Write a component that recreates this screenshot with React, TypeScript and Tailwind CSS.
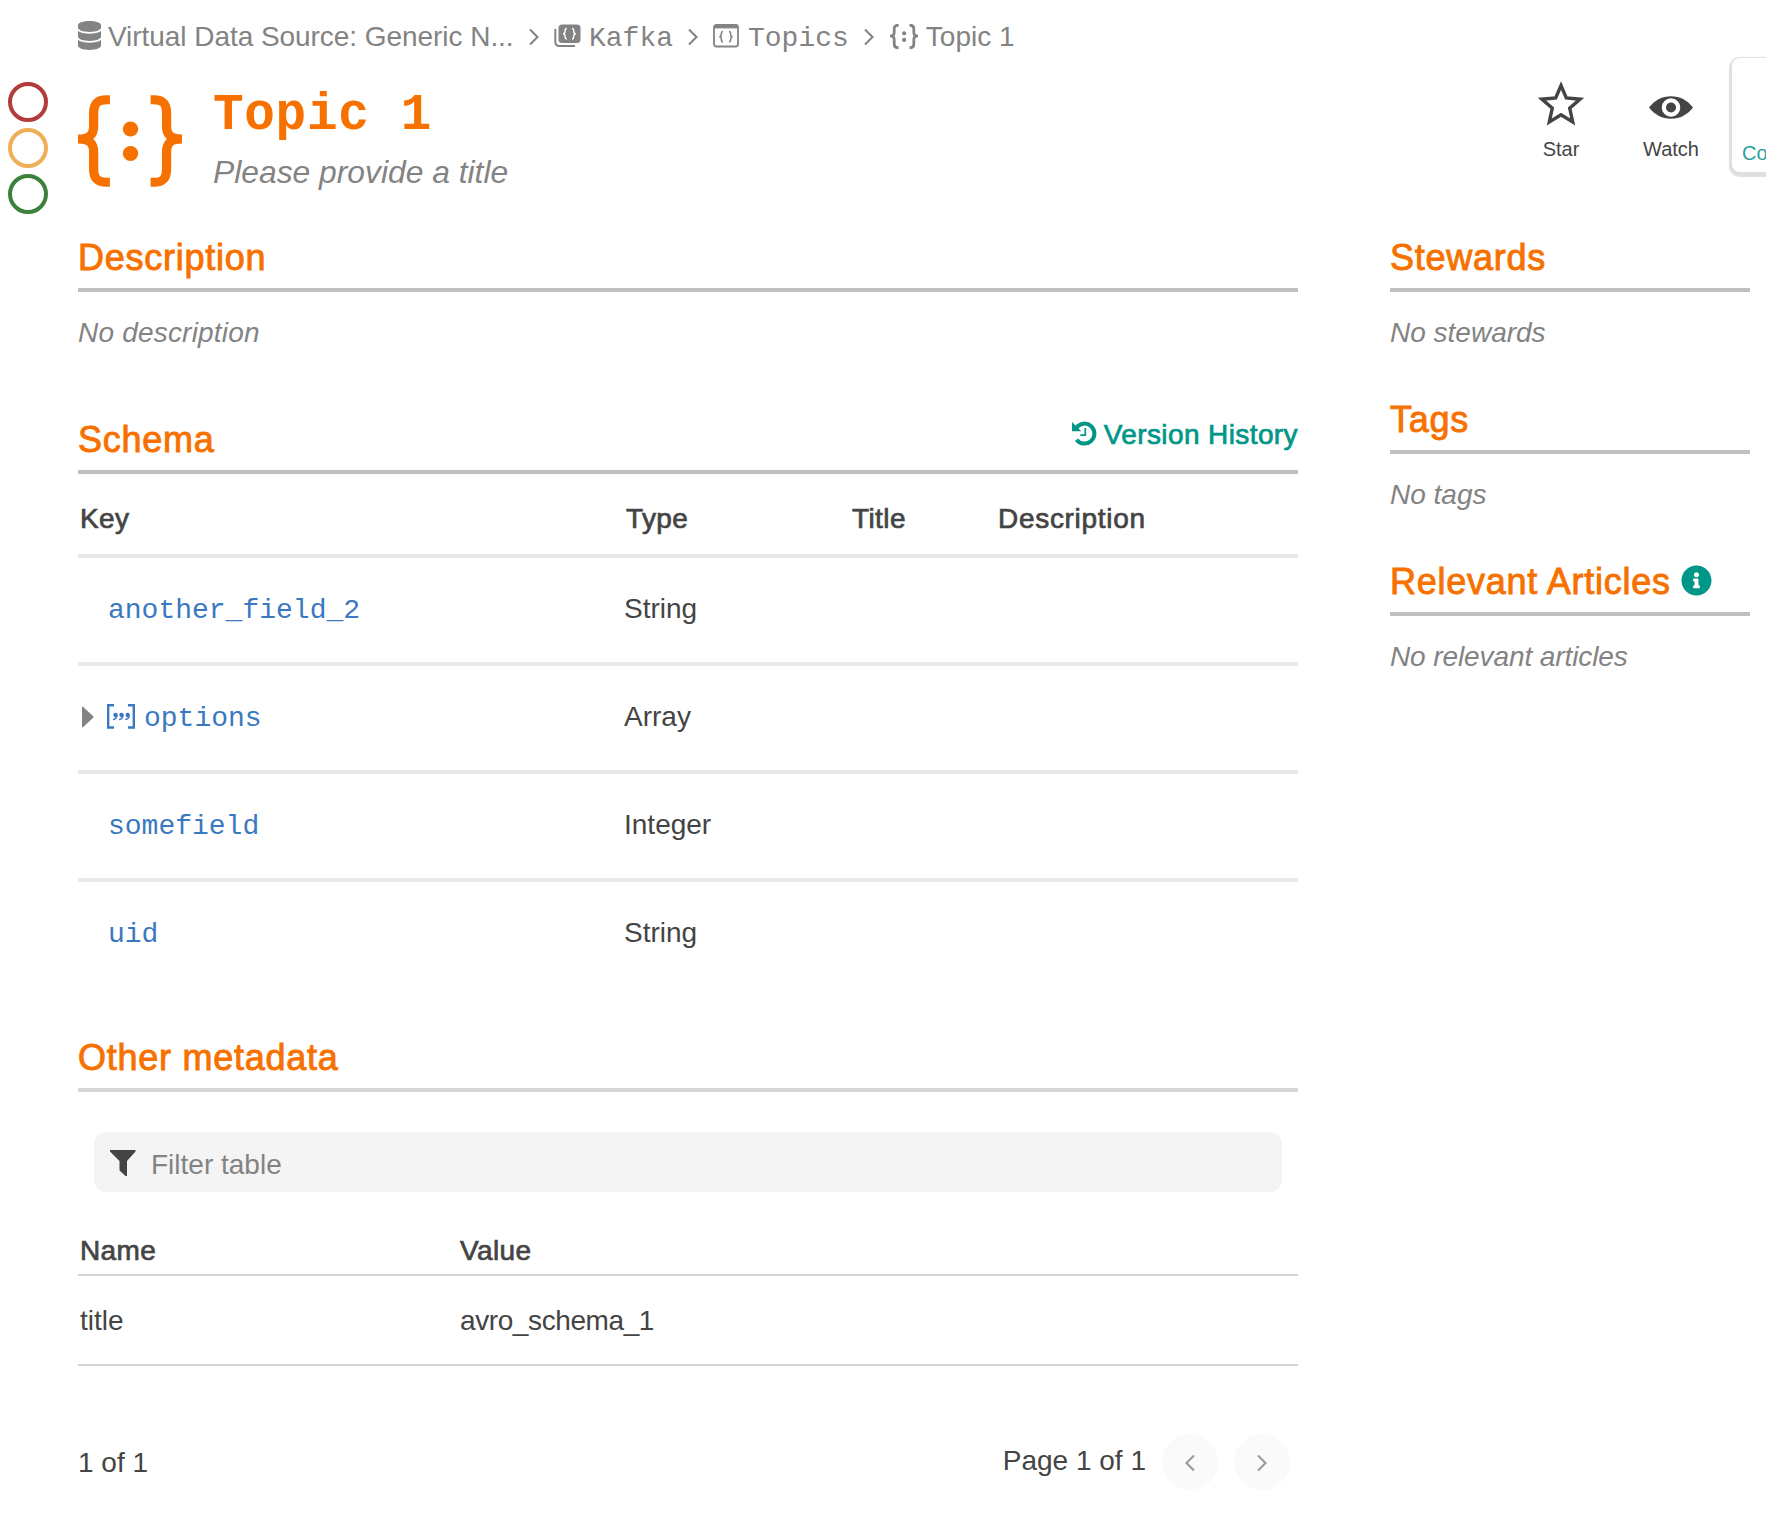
import React from "react";
import { FaDatabase, FaInfoCircle } from "react-icons/fa";

const mono = "font-['Liberation_Mono',monospace]";

function Chevron({ className = "", flip = false }: { className?: string; flip?: boolean }) {
  return (
    <svg className={className} width="10" height="18" viewBox="0 0 10 18" fill="none" stroke="currentColor" strokeWidth="2.100">
      <path d={flip ? "M9 1.5 1.5 9 9 16.5" : "M1 1.5 8.5 9 1 16.5"} />
    </svg>
  );
}

function TopicGlyph({ className, strokeWidth = 9 }: { className: string; strokeWidth?: number }) {
  return (
    <svg className={className} viewBox="0 0 101 92" preserveAspectRatio="none" fill="none" stroke="currentColor" strokeWidth={strokeWidth}>
      <path d="M31 4.7H28C19 4.7 15.200 8.500 15.200 18V31C15.200 40 11 44 0 44C11 44 15.200 48 15.200 57V74C15.200 83.500 19 87.300 28 87.300H31" />
      <path d="M70.500 4.700H73.500C82.500 4.700 86 8.500 86 18V31C86 40 90 44 101 44C90 44 86 48 86 57V74C86 83.500 82.500 87.300 73.500 87.300H70.500" />
      <circle cx="51" cy="34" r="7.500" fill="currentColor" stroke="none" />
      <circle cx="51" cy="58.500" r="7.500" fill="currentColor" stroke="none" />
    </svg>
  );
}

function StackIcon() {
  return (
    <svg width="27" height="24" viewBox="0 0 27 24" fill="none">
      <path d="M1.300 5V18C1.300 20.500 3 22 5.500 22H21" stroke="currentColor" strokeWidth="2" />
      <rect x="4.500" y="0.500" width="22" height="18.500" rx="3.500" fill="currentColor" />
      <path d="M12.800 4.500C11 4.500 11 5.500 11 7.500S10.500 9.800 9 9.800C10.500 9.800 11 10.200 11 12S11 15 12.800 15M18 4.500C19.800 4.500 19.800 5.500 19.800 7.500S20.300 9.800 21.800 9.800C20.300 9.800 19.800 10.200 19.800 12S19.800 15 18 15" stroke="white" strokeWidth="1.400" />
    </svg>
  );
}

function WindowIcon() {
  return (
    <svg width="26" height="24" viewBox="0 0 26 24" fill="none" stroke="currentColor">
      <rect x="1" y="1" width="24" height="21.500" rx="2.500" strokeWidth="1.800" />
      <path d="M1.500 2.500H24.500" strokeWidth="3.800" />
      <path d="M10 7.500C8.300 7.500 8.300 8.500 8.300 10.300S7.800 12.800 6.300 12.800C7.800 12.800 8.300 13.300 8.300 15S8.300 18 10 18M16 7.500C17.700 7.500 17.700 8.500 17.700 10.300S18.200 12.800 19.700 12.800C18.200 12.800 17.700 13.300 17.700 15S17.700 18 16 18" strokeWidth="1.500" />
    </svg>
  );
}

function ArrayIcon() {
  return (
    <svg width="28" height="25" viewBox="0 0 28 25" fill="none" stroke="currentColor">
      <path d="M7 1.200H1.200V23.500H7M21 1.200H26.800V23.500H21" strokeWidth="2.400" />
      {[8.500, 14.500, 20.700].map((x) => (
        <g key={x}>
          <circle cx={x} cy="11" r="2.200" fill="currentColor" stroke="none" />
          <path d={`M${x + 1.400} 11C${x + 1.400} 14 ${x - 0.500} 15.300 ${x - 2.500} 15.600`} strokeWidth="1.500" />
        </g>
      ))}
    </svg>
  );
}

function HistoryIcon() {
  return (
    <svg width="25" height="25" viewBox="0 0 25 25" fill="none" stroke="currentColor">
      <path d="M4.500 6.500A10 10 0 1 1 4.500 18.700" strokeWidth="4" />
      <path d="M0 1V10.300H9.300Z" fill="currentColor" stroke="none" />
      <path d="M13.300 7V14.200H8.300" strokeWidth="1.700" />
    </svg>
  );
}

function Heading({ children, light = false }: { children: React.ReactNode; light?: boolean }) {
  return (
    <h2
      className={`flex h-14 items-start border-b-4 text-[36px] leading-[44px] font-normal tracking-[0.75px] text-[#f77100] [-webkit-text-stroke:0.9px_#f77100] ${
        light ? "border-[#d6d6d6]" : "border-[#c0c0c0]"
      }`}
    >
      {children}
    </h2>
  );
}

const medium = "tracking-[0.4px] [-webkit-text-stroke:0.7px]";

const fields = [
  { name: "another_field_2", type: "String" },
  { name: "options", type: "Array", array: true },
  { name: "somefield", type: "Integer" },
  { name: "uid", type: "String" },
];

export default function App() {
  return (
    <div className="h-[1540px] w-[1766px] overflow-hidden bg-white font-['Liberation_Sans',sans-serif] text-[28px] leading-10 text-[#444]">
      <nav className="flex h-[72px] items-center pl-[78px] text-[#838383]">
        <FaDatabase preserveAspectRatio="none" className="mb-px h-[29px] w-[23px]" />
        <span className="mt-0.5 ml-[7px] w-[391px] whitespace-nowrap tracking-[-0.05px]">Virtual Data Source: Generic N...</span>
        <Chevron className="mt-px ml-[30px]" />
        <span className="ml-[15px]"><StackIcon /></span>
        <span className={`mt-[5px] ml-2 ${mono}`}>Kafka</span>
        <Chevron className="mt-px ml-[15px]" />
        <span className="ml-[15px]"><WindowIcon /></span>
        <span className={`mt-[5px] ml-[9px] ${mono}`}>Topics</span>
        <Chevron className="mt-px ml-[15px]" />
        <TopicGlyph className="ml-4 h-[25px] w-[28px]" strokeWidth={10} />
        <span className="mt-0.5 ml-2">Topic 1</span>
      </nav>

      <header className="flex h-[164px] w-[1900px] items-start">
        <div className="mt-[10px] ml-2 flex w-[70px] flex-col gap-[6px]">
          <span className="size-10 rounded-full border-4 border-[#b23c3c]" />
          <span className="size-10 rounded-full border-4 border-[#efae58]" />
          <span className="size-10 rounded-full border-4 border-[#3c803c]" />
        </div>
        <TopicGlyph className="mt-[23px] h-[92px] w-[104px] text-[#f77100]" />
        <div className="mt-[14px] ml-[30px] w-[1294px]">
          <h1 className={`ml-[1px] text-[51px] leading-[60px] font-bold tracking-[0.7px] text-[#f77100] ${mono}`}>Topic 1</h1>
          <p className="mt-[6px] ml-px text-[31.8px] leading-10 text-[#838383] italic">Please provide a title</p>
        </div>
        <div className="mt-[9px] flex w-[110px] flex-col items-center text-xl leading-7">
          <svg width="46" height="46" viewBox="0 0 46 46" fill="none" stroke="currentColor" strokeWidth="3.400">
            <path d="M23 4.500 28.300 17 42 18.200 31.700 27.200 34.700 41 23 33.800 11.300 41 14.300 27.200 4 18.200 17.700 17Z" />
          </svg>
          <span className="mt-2">Star</span>
        </div>
        <div className="mt-[10px] flex w-[110px] flex-col items-center text-xl leading-7">
          <svg width="46" height="46" viewBox="0 0 46 46">
            <path d="M1 25.500C7 18 14 14.200 23 14.200S39 18 45 25.500C39 33 32 36.800 23 36.800S7 33 1 25.500Z" fill="currentColor" />
            <circle cx="23" cy="25.500" r="9.300" fill="white" />
            <circle cx="23" cy="25.500" r="5" fill="currentColor" />
          </svg>
          <span className="mt-[7px]">Watch</span>
        </div>
        <div className="-mt-[14px] ml-[6px] h-[114px] w-[110px] rounded-lg bg-white pt-[81px] pl-[10px] text-xl leading-7 text-[#26a297] shadow-[0_2px_1px_3px_#dfdfdf]">
          Co
        </div>
      </header>

      <div className="flex pl-[78px]">
        <main className="w-[1220px]">
          <Heading>Description</Heading>
          <p className="mt-[21px] tracking-[0.2px] text-[#838383] italic">No description</p>

          <section className="mt-[65px]">
            <div className="relative">
              <Heading>Schema</Heading>
              <a className={`absolute top-[-3px] right-0 flex items-center gap-[7px] text-[#009688] ${medium}`}>
                <span className="mb-[3px]"><HistoryIcon /></span>
                Version History
              </a>
            </div>
            <div className={`flex h-[84px] items-center border-b-4 border-[#e8e8e8] pt-[10px] pl-[2px] ${medium}`}>
              <span className="w-[546px]">Key</span>
              <span className="w-[226px]">Type</span>
              <span className="w-[146px]">Title</span>
              <span className="tracking-[0.7px]">Description</span>
            </div>
            {fields.map((f) => (
              <div key={f.name} className="flex h-[108px] items-center border-b-4 border-[#e8e8e8] last:border-transparent">
                <div className={`flex w-[546px] items-center text-[#3a78c0] ${mono}`}>
                  {f.array ? (
                    <>
                      <svg className="mb-[3px] ml-1" width="12" height="22" viewBox="0 0 12 22">
                        <path d="M0 1.500Q0 0 1.200 1L11.200 10.200Q12 11 11.200 11.800L1.200 21Q0 22 0 20.500Z" fill="#838383" />
                      </svg>
                      <span className="mb-1 ml-[13px]"><ArrayIcon /></span>
                      <span className="mt-0.5 ml-[9px]">{f.name}</span>
                    </>
                  ) : (
                    <span className="mt-0.5 ml-[30px]">{f.name}</span>
                  )}
                </div>
                <span className="mb-0.5">{f.type}</span>
              </div>
            ))}
          </section>

          <section className="mt-[46px]">
            <Heading light>Other metadata</Heading>
            <div className="mx-4 mt-10 flex h-[60px] items-center rounded-xl bg-[#f4f4f4] pl-4">
              <svg className="mt-0.5" width="26" height="26" viewBox="0 0 26 26">
                <path d="M0 0H25.500V1.500L17 11V26H15.500L9.500 20.500V11L0 1.500Z" fill="#444" />
              </svg>
              <span className="mt-[6px] ml-[15px] text-[#838383]">Filter table</span>
            </div>
            <div className={`mt-[39px] flex h-[45px] border-b-2 border-[#d6d6d6] pl-[2px] ${medium}`}>
              <span className="w-[380px]">Name</span>
              <span>Value</span>
            </div>
            <div className="flex h-[90px] items-center border-b-2 border-[#d6d6d6] pt-0.5 pl-[2px]">
              <span className="w-[380px]">title</span>
              <span className="tracking-[-0.4px]">avro_schema_1</span>
            </div>
            <div className="mt-[68px] flex h-14 items-center pr-2">
              <span className="mt-0.5 flex-1">1 of 1</span>
              <span className="mr-4 mb-0.5">Page 1 of 1</span>
              <button className="mr-4 flex size-14 items-center justify-center rounded-full bg-[#fafafa] pt-0.5 text-[#999]"><Chevron flip /></button>
              <button className="flex size-14 items-center justify-center rounded-full bg-[#fafafa] pt-0.5 text-[#999]"><Chevron /></button>
            </div>
          </section>
        </main>

        <aside className="ml-[92px] w-[360px] text-[#838383]">
          <Heading>Stewards</Heading>
          <p className="mt-[21px] mb-[45px] italic">No stewards</p>
          <Heading>Tags</Heading>
          <p className="mt-[21px] mb-[45px] italic">No tags</p>
          <Heading>
            Relevant Articles
            <FaInfoCircle className="mt-[5px] ml-[10px] size-[31px] text-[#009688] [stroke:none]" />
          </Heading>
          <p className="mt-[21px] tracking-[-0.1px] italic">No relevant articles</p>
        </aside>
      </div>
    </div>
  );
}
